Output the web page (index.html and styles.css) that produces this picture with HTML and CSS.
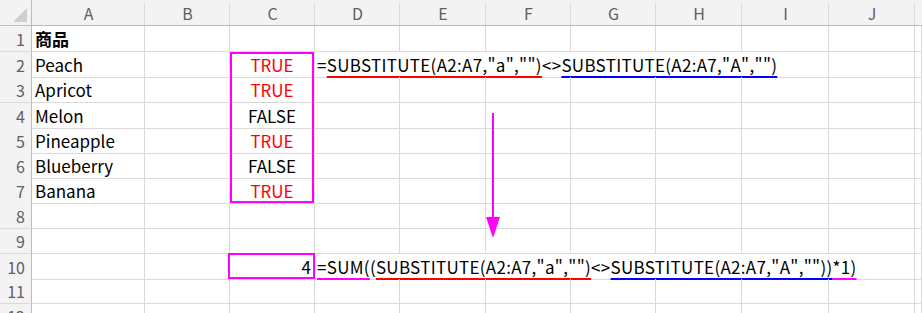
FILE: index.html
```html
<!DOCTYPE html>
<html lang="ja">
<head>
<meta charset="utf-8">
<title>Sheet</title>
<link rel="stylesheet" href="styles.css">
</head>
<body>
<div class="sheet">
  <div class="row hdr h26">
    <div class="corner"><span class="tri"></span></div>
    <div class="ch">A</div><div class="ch">B</div><div class="ch">C</div><div class="ch">D</div><div class="ch">E</div><div class="ch">F</div><div class="ch">G</div><div class="ch">H</div><div class="ch">I</div><div class="ch">J</div><div class="ch last"></div>
  </div>
  <div class="row h26">
    <div class="rh">1</div><div class="c b">商品</div><div class="c"></div><div class="c"></div><div class="c"></div><div class="c"></div><div class="c"></div><div class="c"></div><div class="c"></div><div class="c"></div><div class="c"></div><div class="c"></div>
  </div>
  <div class="row h25">
    <div class="rh">2</div><div class="c">Peach</div><div class="c"></div><div class="c ctr red">TRUE</div>
    <div class="c f span6"><span>=</span><span class="ul red-ul">SUBSTITUTE(A2:A7,"a","")</span><span>&lt;&gt;</span><span class="ul blue-ul">SUBSTITUTE(A2:A7,"A","")</span></div>
    <div class="c"></div><div class="c"></div>
  </div>
  <div class="row h26">
    <div class="rh">3</div><div class="c">Apricot</div><div class="c"></div><div class="c ctr red">TRUE</div><div class="c"></div><div class="c"></div><div class="c"></div><div class="c"></div><div class="c"></div><div class="c"></div><div class="c"></div><div class="c"></div>
  </div>
  <div class="row h25">
    <div class="rh">4</div><div class="c">Melon</div><div class="c"></div><div class="c ctr">FALSE</div><div class="c"></div><div class="c"></div><div class="c"></div><div class="c"></div><div class="c"></div><div class="c"></div><div class="c"></div><div class="c"></div>
  </div>
  <div class="row h25">
    <div class="rh">5</div><div class="c">Pineapple</div><div class="c"></div><div class="c ctr red">TRUE</div><div class="c"></div><div class="c"></div><div class="c"></div><div class="c"></div><div class="c"></div><div class="c"></div><div class="c"></div><div class="c"></div>
  </div>
  <div class="row h25">
    <div class="rh">6</div><div class="c">Blueberry</div><div class="c"></div><div class="c ctr">FALSE</div><div class="c"></div><div class="c"></div><div class="c"></div><div class="c"></div><div class="c"></div><div class="c"></div><div class="c"></div><div class="c"></div>
  </div>
  <div class="row h25">
    <div class="rh">7</div><div class="c">Banana</div><div class="c"></div><div class="c ctr red">TRUE</div><div class="c"></div><div class="c"></div><div class="c"></div><div class="c"></div><div class="c"></div><div class="c"></div><div class="c"></div><div class="c"></div>
  </div>
  <div class="row h26">
    <div class="rh">8</div><div class="c"></div><div class="c"></div><div class="c"></div><div class="c"></div><div class="c"></div><div class="c"></div><div class="c"></div><div class="c"></div><div class="c"></div><div class="c"></div><div class="c"></div>
  </div>
  <div class="row h25">
    <div class="rh">9</div><div class="c"></div><div class="c"></div><div class="c"></div><div class="c"></div><div class="c"></div><div class="c"></div><div class="c"></div><div class="c"></div><div class="c"></div><div class="c"></div><div class="c"></div>
  </div>
  <div class="row h25">
    <div class="rh">10</div><div class="c"></div><div class="c"></div><div class="c num">4</div>
    <div class="c f span7"><span class="ul mag-ul">=SUM(</span><span>(</span><span class="ul red-ul">SUBSTITUTE(A2:A7,"a","")</span><span>&lt;&gt;</span><span class="ul blue-ul">SUBSTITUTE(A2:A7,"A",""))</span><span class="ul mag-ul">*1)</span></div>
    <div class="c"></div>
  </div>
  <div class="row h25">
    <div class="rh">11</div><div class="c"></div><div class="c"></div><div class="c"></div><div class="c"></div><div class="c"></div><div class="c"></div><div class="c"></div><div class="c"></div><div class="c"></div><div class="c"></div><div class="c"></div>
  </div>
  <div class="row h25">
    <div class="rh">12</div><div class="c"></div><div class="c"></div><div class="c"></div><div class="c"></div><div class="c"></div><div class="c"></div><div class="c"></div><div class="c"></div><div class="c"></div><div class="c"></div><div class="c"></div>
  </div>

  <div class="box box-c"></div>
  <div class="box box-c10"></div>
  <div class="arrow"><span class="shaft"></span><span class="head"></span></div>
</div>
</body>
</html>
```

FILE: styles.css
```css
html, body {
  margin: 0;
  padding: 0;
  background: #fff;
  overflow: hidden;
}
.sheet {
  position: relative;
  width: 922px;
  height: 313px;
  overflow: hidden;
  font-family: "Noto Sans CJK JP", "Noto Sans", sans-serif;
  font-size: 17px;
  color: #000;
}
.row {
  display: grid;
  grid-template-columns: 32px 113px 85px 85px 85px 86px 85px 85px 86px 87px 86px 1fr;
}
.h25 { height: 25px; }
.h26 { height: 26px; }
.row > div {
  box-sizing: border-box;
  border-right: 1px solid #dadada;
  border-bottom: 1px solid #dadada;
  white-space: nowrap;
  display: flex;
  align-items: center;
  min-width: 0;
}
.hdr > div {
  background: #f3f3f3;
  border-bottom: 1px solid #bcbcbc;
  border-right: none;
  color: #5f5f5f;
  font-size: 16px;
  justify-content: center;
}
.hdr > .ch {
  background: linear-gradient(#dadada, #dadada) right 4px / 1px calc(100% - 4px) no-repeat, #f3f3f3;
}
.hdr > .ch.last { background: #f3f3f3; }
.hdr > .corner {
  position: relative;
  border-right: 1px solid #bcbcbc;
}
.tri {
  position: absolute;
  right: 4px;
  bottom: 3px;
  width: 0;
  height: 0;
  border-left: 14px solid transparent;
  border-bottom: 14px solid #cfcfcf;
}
.row > .rh {
  background: #f3f3f3;
  border-right: 1px solid #bcbcbc;
  justify-content: flex-end;
  padding-right: 6px;
  color: #5f5f5f;
  font-size: 16px;
}
.c { padding-left: 3px; }
.b { font-weight: bold; }
.ctr { justify-content: center; padding-left: 0; }
.red { color: #ff0000; }
.num { justify-content: flex-end; padding-right: 3px; }
.f { padding-left: 2px; overflow: visible; letter-spacing: 0.3px; }
.span6 { grid-column: span 6; }
.span7 { grid-column: span 7; }
.ul {
  text-decoration-line: underline;
  text-decoration-thickness: 2px;
  text-underline-offset: 4px;
  text-decoration-skip-ink: none;
}
.red-ul { text-decoration-color: #ff0000; }
.blue-ul { text-decoration-color: #0000ff; }
.mag-ul { text-decoration-color: #ff00ff; }

.box {
  position: absolute;
  box-sizing: border-box;
  border: 2px solid #ff00ff;
}
.box-c { left: 230px; top: 52px; width: 84px; height: 151px; }
.box-c10 { left: 228px; top: 253px; width: 87px; height: 26px; }
.arrow {
  position: absolute;
  left: 486px;
  top: 113px;
  width: 14px;
  height: 125px;
  display: flex;
  flex-direction: column;
  align-items: center;
}
.shaft {
  width: 2px;
  height: 104px;
  background: #ff00ff;
}
.head {
  width: 0;
  height: 0;
  border-left: 7px solid transparent;
  border-right: 7px solid transparent;
  border-top: 21px solid #ff00ff;
}
```
